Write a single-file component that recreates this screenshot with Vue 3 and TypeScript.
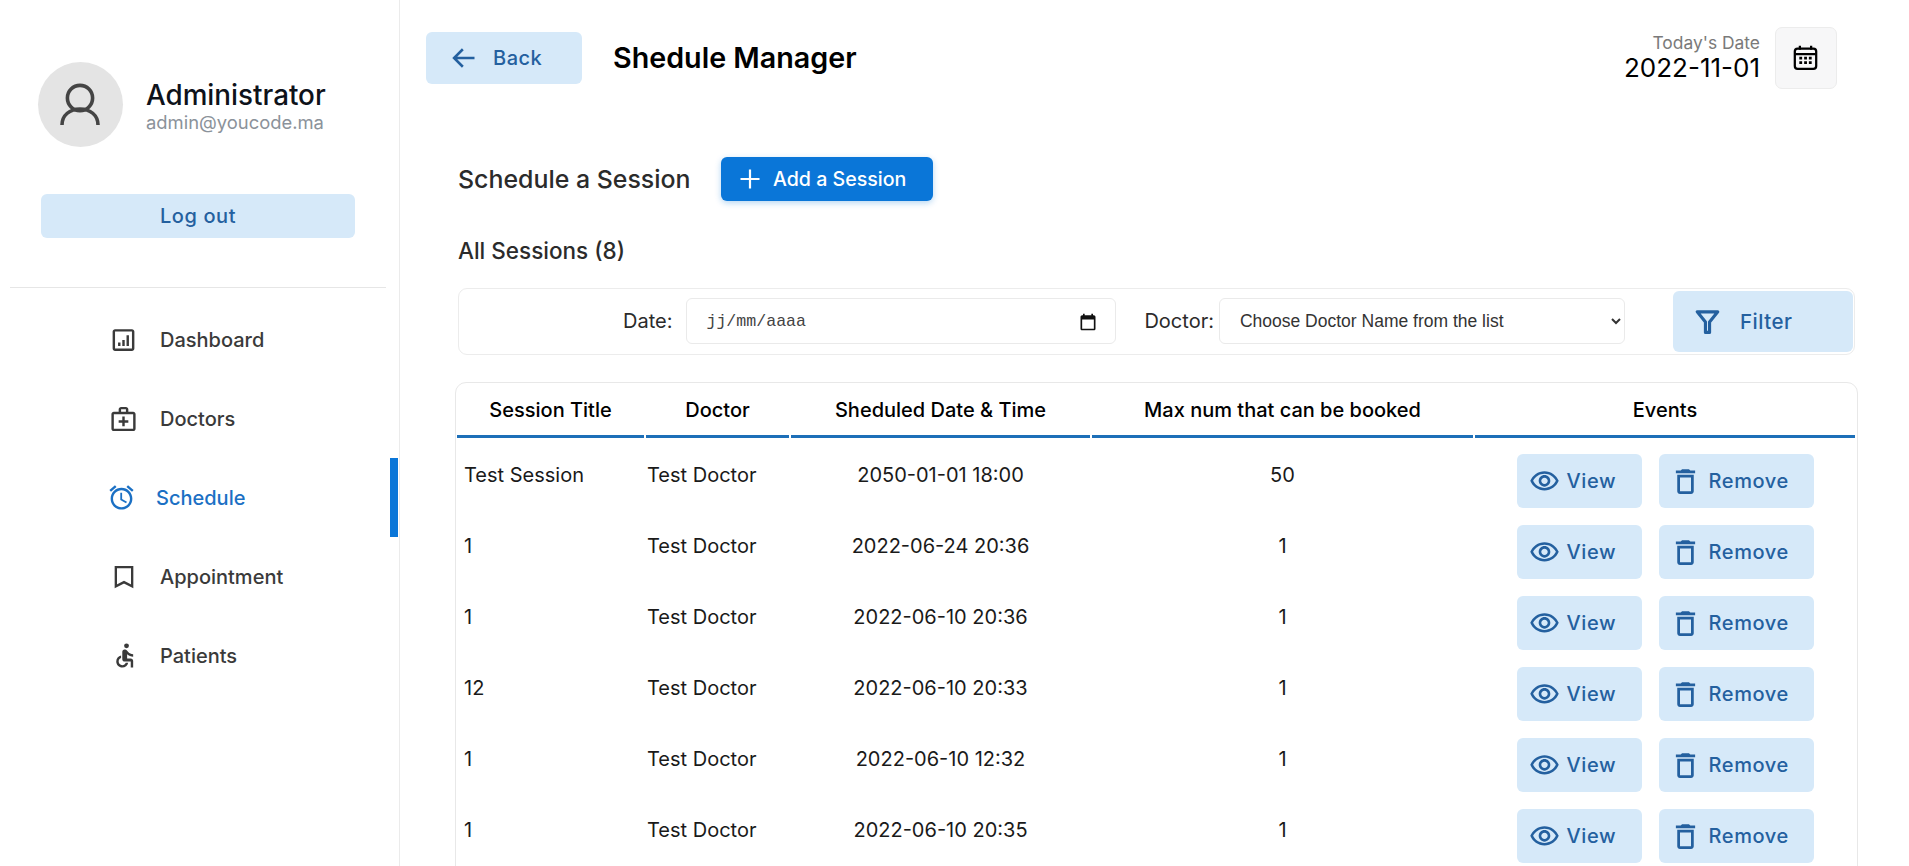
<script setup lang="ts">
type Session = {
    title: string
    doctor: string
    date: string
    max: number
}

type MenuItem = {
    label: string
    active?: boolean
    icon: string
}

const menu: MenuItem[] = [
    { label: 'Dashboard', icon: 'dashboard' },
    { label: 'Doctors', icon: 'doctors' },
    { label: 'Schedule', icon: 'schedule', active: true },
    { label: 'Appointment', icon: 'appointment' },
    { label: 'Patients', icon: 'patients' }
]

const sessions: Session[] = [
    { title: 'Test Session', doctor: 'Test Doctor', date: '2050-01-01 18:00', max: 50 },
    { title: '1', doctor: 'Test Doctor', date: '2022-06-24 20:36', max: 1 },
    { title: '1', doctor: 'Test Doctor', date: '2022-06-10 20:36', max: 1 },
    { title: '12', doctor: 'Test Doctor', date: '2022-06-10 20:33', max: 1 },
    { title: '1', doctor: 'Test Doctor', date: '2022-06-10 12:32', max: 1 },
    { title: '1', doctor: 'Test Doctor', date: '2022-06-10 20:35', max: 1 }
]
</script>

<template>
    <div class="page">
        <aside class="sidebar">
            <div class="profile">
                <div class="profile__avatar">
                    <svg viewBox="0 0 85 85" width="85" height="85" fill="none" stroke="#444" stroke-width="3.6">
                        <circle cx="42" cy="36" r="12.6" />
                        <path d="M24 63c0-10 8-16 18-16s18 6 18 16" />
                    </svg>
                </div>
                <div class="profile__text">
                    <div class="profile__name">Administrator</div>
                    <div class="profile__mail">admin@youcode.ma</div>
                </div>
            </div>
            <button class="btn btn--soft logout">Log out</button>
            <div class="sidebar__line"></div>
            <nav class="menu">
                <a v-for="item in menu" :key="item.label" class="menu__item" :class="{ 'menu__item--active': item.active }">
                    <span class="menu__icon">
                        <svg v-if="item.icon === 'dashboard'" viewBox="0 0 24 24" width="30" height="30" fill="currentColor">
                            <path d="M19 3H5c-1.1 0-2 .9-2 2v14c0 1.1.9 2 2 2h14c1.1 0 2-.9 2-2V5c0-1.1-.9-2-2-2zm0 16H5V5h14v14z" />
                            <path d="M7.500 14h2v3h-2zm3.500-2h2v5h-2zm3.500-4h2v9h-2z" />
                        </svg>
                        <svg v-else-if="item.icon === 'doctors'" viewBox="0 0 24 24" width="30" height="30" fill="currentColor">
                            <path d="M20 6h-4V4c0-1.1-.9-2-2-2h-4c-1.1 0-2 .9-2 2v2H4c-1.1 0-2 .9-2 2v12c0 1.1.9 2 2 2h16c1.1 0 2-.9 2-2V8c0-1.1-.9-2-2-2zM10 4h4v2h-4V4zm10 16H4V8h16v12z" />
                            <path d="M13 10h-2v3H8v2h3v3h2v-3h3v-2h-3z" />
                        </svg>
                        <svg v-else-if="item.icon === 'schedule'" viewBox="0 0 24 24" width="29" height="29" fill="currentColor">
                            <path d="M22 5.72l-4.6-3.86-1.29 1.53 4.6 3.86L22 5.72zM7.88 3.39L6.6 1.86 2 5.71l1.29 1.53 4.59-3.85zM12.5 8H11v6l4.75 2.85.75-1.23-4-2.37V8zM12 4c-4.97 0-9 4.03-9 9s4.03 9 9 9c4.97 0 9-4.03 9-9s-4.03-9-9-9zm0 16c-3.87 0-7-3.13-7-7s3.13-7 7-7 7 3.13 7 7-3.13 7-7 7z" />
                        </svg>
                        <svg v-else-if="item.icon === 'appointment'" viewBox="0 0 24 24" width="28" height="28" fill="none" stroke="currentColor" stroke-width="2">
                            <path d="M5 3.500h14v16.500l-7-3.600-7 3.600z" />
                        </svg>
                        <svg v-else viewBox="0 0 24 24" width="29" height="29" fill="currentColor">
                            <circle cx="14.500" cy="4" r="2" />
                            <path d="M20 13v-2c-1.54.02-3.09-.75-4.07-1.83l-1.29-1.43c-.17-.19-.38-.34-.61-.45-.01 0-.01-.01-.02-.01H14c-.35-.2-.75-.3-1.19-.26C11.76 7.11 11 8.04 11 9.09V15c0 1.1.9 2 2 2h5v5h2v-5.500c0-1.1-.9-2-2-2h-3v-3.450c1.29 1.07 3.25 1.94 5 1.950zm-6.170 5c-.41 1.16-1.52 2-2.830 2-1.660 0-3-1.340-3-3 0-1.310.84-2.410 2-2.830V12.100c-2.280.46-4 2.480-4 4.900 0 2.760 2.240 5 5 5 2.420 0 4.440-1.720 4.900-4h-2.070z" />
                        </svg>
                    </span>
                    <span class="menu__label">{{ item.label }}</span>
                </a>
            </nav>
        </aside>

        <main class="main">
            <header class="top">
                <button class="btn btn--soft back">
                    <svg viewBox="0 0 24 24" width="28" height="28" fill="none" stroke="currentColor" stroke-width="2.2">
                        <path d="M21 12H3.500M11 4.500L3.500 12l7.500 7.500" />
                    </svg>
                    <span>Back</span>
                </button>
                <h1 class="top__title">Shedule Manager</h1>
                <div class="today">
                    <div class="today__text">
                        <div class="today__label">Today's Date</div>
                        <div class="today__date">2022-11-01</div>
                    </div>
                    <div class="today__icon">
                        <svg viewBox="0 0 24 24" width="27" height="27" fill="none" stroke="#000" stroke-width="2">
                            <rect x="2.500" y="4" width="19" height="18" rx="2.500" />
                            <path d="M3 9h18M7 1.500V5M17 1.500V5" />
                            <path d="M6.500 12.500h2.500M10.800 12.500h2.500M15 12.500h2.500M6.500 16.500h2.500M10.800 16.500h2.500M15 16.500h2.500" stroke-width="2.400" />
                        </svg>
                    </div>
                </div>
            </header>

            <section class="content">
                <div class="schedule">
                    <h2 class="schedule__title">Schedule a Session</h2>
                    <button class="btn btn--primary add">
                        <svg viewBox="0 0 24 24" width="24" height="24" fill="none" stroke="currentColor" stroke-width="2.2">
                            <path d="M12 2.500v19M2.500 12h19" />
                        </svg>
                        <span>Add a Session</span>
                    </button>
                </div>
                <h3 class="count">All Sessions (8)</h3>

                <div class="filter">
                    <label class="filter__label filter__label--date">Date:</label>
                    <div class="field field--date">
                        <span>jj/mm/aaaa</span>
                        <svg viewBox="0 0 24 24" width="20" height="20" fill="#111">
                            <path d="M19 4h-1V2h-2v2H8V2H6v2H5c-1.100 0-2 .9-2 2v14c0 1.100.9 2 2 2h14c1.100 0 2-.9 2-2V6c0-1.100-.9-2-2-2zm0 16H5V9h14v11z" />
                        </svg>
                    </div>
                    <label class="filter__label filter__label--doctor">Doctor:</label>
                    <select class="field field--select">
                        <option>Choose Doctor Name from the list</option>
                    </select>
                    <button class="btn btn--soft filter__btn">
                        <svg viewBox="0 0 24 24" width="29" height="29" fill="none" stroke="currentColor" stroke-width="2.6" stroke-linejoin="round">
                            <path d="M3.500 4h17l-6.800 8.500v8.500h-3.400v-8.500z" />
                        </svg>
                        <span>Filter</span>
                    </button>
                </div>

                <div class="card">
                    <table class="table">
                        <colgroup>
                            <col class="table__col1" />
                            <col class="table__col2" />
                            <col class="table__col3" />
                            <col class="table__col4" />
                            <col />
                        </colgroup>
                        <thead>
                            <tr>
                                <th>Session Title</th>
                                <th>Doctor</th>
                                <th>Sheduled Date &amp; Time</th>
                                <th>Max num that can be booked</th>
                                <th>Events</th>
                            </tr>
                        </thead>
                        <tbody>
                            <tr v-for="(session, index) in sessions" :key="index">
                                <td class="table__title"><span>{{ session.title }}</span></td>
                                <td><span>{{ session.doctor }}</span></td>
                                <td class="table__center"><span>{{ session.date }}</span></td>
                                <td class="table__center"><span>{{ session.max }}</span></td>
                                <td class="table__events">
                                    <div class="events">
                                        <button class="btn btn--soft action action--view">
                                            <svg viewBox="0 0 24 24" width="31" height="31" fill="currentColor">
                                                <path d="M12 6c3.790 0 7.170 2.130 8.820 5.500C19.170 14.870 15.790 17 12 17s-7.170-2.130-8.820-5.500C4.830 8.130 8.210 6 12 6m0-2C7 4 2.730 7.110 1 11.500 2.730 15.890 7 19 12 19s9.270-3.110 11-7.500C21.270 7.110 17 4 12 4zm0 5c1.380 0 2.500 1.120 2.500 2.500S13.380 14 12 14s-2.500-1.120-2.500-2.500S10.620 9 12 9m0-2c-2.480 0-4.500 2.020-4.500 4.500S9.520 16 12 16s4.500-2.020 4.500-4.500S14.480 7 12 7z" />
                                            </svg>
                                            <span>View</span>
                                        </button>
                                        <button class="btn btn--soft action action--remove">
                                            <svg viewBox="0 0 24 24" width="33" height="33" fill="currentColor">
                                                <path d="M16 9v10H8V9h8m-1.500-6h-5l-1 1H5v2h14V4h-3.500l-1-1zM18 7H6v12c0 1.100.9 2 2 2h8c1.100 0 2-.9 2-2V7z" />
                                            </svg>
                                            <span>Remove</span>
                                        </button>
                                    </div>
                                </td>
                            </tr>
                        </tbody>
                    </table>
                </div>
            </section>
        </main>
    </div>
</template>

<style>
    html, body {
        margin: 0;
        background: #fff;
        overflow: hidden;
    }
</style>

<style scoped>
    .page {
        display: flex;
        width: 1909px;
        height: 866px;
        overflow: hidden;
        font-family: Inter, "Liberation Sans", sans-serif;
        color: #2b2b2b;
        background: #fff;
    }

    .sidebar {
        width: 400px;
        flex: none;
        box-sizing: border-box;
        border-right: 1px solid #ebebeb;
        padding-top: 62px;
    }

    .profile {
        display: flex;
        align-items: center;
        gap: 23px;
        padding-left: 38px;
    }

    .profile__avatar {
        width: 85px;
        height: 85px;
        border-radius: 50%;
        background: #e4e4e4;
    }

    .profile__avatar svg {
        display: block;
    }

    .profile__text {
        padding-top: 3px;
    }

    .profile__name {
        font-size: 27.8px;
        font-weight: 500;
        line-height: 32px;
        color: #0e121a;
    }

    .profile__mail {
        font-size: 18.4px;
        line-height: 22px;
        color: #8b929a;
    }

    .btn {
        display: flex;
        align-items: center;
        justify-content: center;
        border: none;
        border-radius: 6px;
        padding: 0;
        font-family: inherit;
        font-weight: 500;
        cursor: pointer;
    }

    .btn--soft {
        background: #d6e9f9;
        color: #24609f;
    }

    .btn--primary {
        background: #0a76d8;
        color: #fff;
        box-shadow: 0 2px 6px rgba(10, 118, 216, 0.3);
    }

    .logout {
        width: 314px;
        height: 44px;
        margin: 47px 0 0 41px;
        font-size: 20px;
        letter-spacing: 0.6px;
    }

    .sidebar__line {
        height: 1px;
        margin: 49px 13px 0 10px;
        background: #e6e6e6;
    }

    .menu {
        margin-top: 12px;
    }

    .menu__item {
        display: flex;
        align-items: center;
        height: 79px;
        padding-left: 109px;
        font-size: 20px;
        font-weight: 500;
        color: #3a3a3a;
    }

    .menu__item--active {
        color: #1b70c4;
        padding-left: 107px;
        border-right: 8px solid #0a76d8;
        margin-right: 1px;
    }

    .menu__icon {
        display: flex;
        justify-content: center;
        width: 29px;
        margin-right: 22px;
    }

    .menu__item--active .menu__icon {
        margin-right: 20px;
    }

    .main {
        flex: 1;
        min-width: 0;
    }

    .top {
        display: flex;
        align-items: flex-start;
        padding: 32px 0 0 26px;
        height: 125px;
        box-sizing: border-box;
    }

    .back {
        justify-content: flex-start;
        width: 156px;
        height: 52px;
        padding-left: 24px;
        gap: 15px;
        font-size: 20px;
        letter-spacing: 0.5px;
    }

    .top__title {
        margin: 0 0 0 31px;
        font-size: 28.7px;
        font-weight: 600;
        line-height: 52px;
        color: #000;
    }

    .today {
        display: flex;
        margin-left: auto;
        margin-right: 72px;
        gap: 15px;
        margin-top: -5px;
    }

    .today__text {
        text-align: right;
        padding-top: 5px;
    }

    .today__label {
        font-size: 17.400px;
        line-height: 22px;
        color: #7a7a7a;
    }

    .today__date {
        font-size: 26px;
        font-weight: 400;
        line-height: 28px;
        color: #000;
    }

    .today__icon {
        display: flex;
        align-items: center;
        justify-content: center;
        box-sizing: border-box;
        width: 62px;
        height: 62px;
        padding: 0 2px 2px 0;
        border: 1px solid #ececec;
        border-radius: 7px;
        background: #f7f7f8;
    }

    .content {
        padding-left: 58px;
    }

    .schedule {
        display: flex;
        align-items: center;
        height: 44px;
        margin-top: 32px;
    }

    .schedule__title {
        width: 232px;
        flex: none;
        margin: 0;
        font-size: 24.900px;
        font-weight: 500;
        color: #2b2b2b;
        white-space: nowrap;
    }

    .add {
        justify-content: flex-start;
        width: 212px;
        height: 44px;
        margin-left: 31px;
        padding-left: 17px;
        gap: 11px;
        font-size: 19.600px;
    }

    .count {
        margin: 36px 0 0;
        font-size: 22.500px;
        font-weight: 500;
        line-height: 28px;
        color: #2b2b2b;
    }

    .filter {
        display: flex;
        align-items: center;
        box-sizing: border-box;
        width: 1397px;
        height: 67px;
        margin-top: 23px;
        padding: 0 1px 2px 0;
        border: 1px solid #ececec;
        border-radius: 9px;
        font-size: 20px;
        font-weight: 400;
    }

    .filter__label {
        color: #2b2b2b;
    }

    .filter__label--date {
        margin-left: 164px;
        margin-right: 14px;
    }

    .filter__label--doctor {
        margin-left: 28px;
        margin-right: 5px;
    }

    .field {
        box-sizing: border-box;
        height: 46px;
        border: 1px solid #eaeaea;
        border-radius: 6px;
        background: #fff;
    }

    .field--date {
        display: flex;
        align-items: center;
        justify-content: space-between;
        width: 430px;
        padding: 2px 17px 0 19px;
        font-family: "Liberation Mono", monospace;
        font-size: 16.600px;
        color: #444;
    }

    .field--select {
        width: 406px;
        padding: 0 8px 0 16px;
        font-family: "Liberation Sans", sans-serif;
        font-size: 17.500px;
        color: #333;
    }

    .filter__btn {
        justify-content: flex-start;
        width: 180px;
        height: 61px;
        margin-top: 2px;
        margin-left: auto;
        padding-left: 20px;
        gap: 18px;
        font-size: 20.500px;
        letter-spacing: 0.5px;
    }

    .card {
        box-sizing: border-box;
        width: 1403px;
        min-height: 600px;
        margin: 27px 0 0 -3px;
        border: 1px solid #e8e8e8;
        border-radius: 11px;
    }

    .table {
        width: 1402px;
        margin-left: -1px;
        table-layout: fixed;
        border-collapse: separate;
        border-spacing: 2px 0;
        font-size: 20px;
        color: #1a1a1a;
    }

    .table__col1 { width: 187px; }
    .table__col2 { width: 143px; }
    .table__col3 { width: 299px; }
    .table__col4 { width: 381px; }

    .table th {
        height: 55px;
        padding: 2px 0 0;
        box-sizing: border-box;
        border-bottom: 3px solid #1d6fb8;
        font-size: 20px;
        font-weight: 500;
        color: #000;
        text-align: center;
    }

    .table td {
        height: 71px;
        padding: 0 0 0 1px;
        box-sizing: border-box;
        white-space: nowrap;
        vertical-align: top;
    }

    .table td > span {
        display: block;
        padding-top: 24px;
        line-height: 26px;
    }

    .table td.table__title {
        padding-left: 7px;
    }

    .table td.table__center {
        padding: 0;
        text-align: center;
    }

    .table td.table__events {
        padding: 16px 0 0;
    }

    .events {
        display: flex;
        justify-content: center;
        gap: 17px;
    }

    .action {
        justify-content: flex-start;
        height: 54px;
        font-size: 20px;
        letter-spacing: 0.6px;
    }

    .action--view {
        width: 125px;
        padding-left: 12px;
        gap: 7px;
    }

    .action--remove {
        width: 155px;
        padding-left: 10px;
        gap: 7px;
    }
</style>
